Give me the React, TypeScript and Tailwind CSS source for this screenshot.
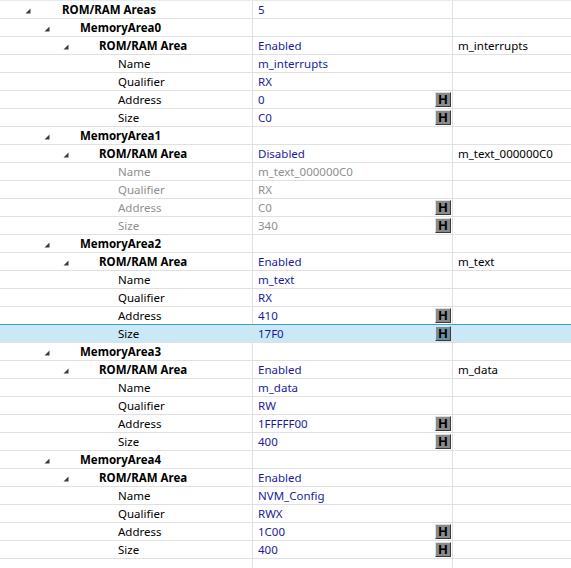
import React from 'react';

type Row = {
    level: number;
    label: string;
    value?: string;
    extra?: string;
    bold?: boolean;
    expandable?: boolean;
    hex?: boolean;
    disabled?: boolean;
    selected?: boolean;
};

const areas = [
    { state: 'Enabled', name: 'm_interrupts', qualifier: 'RX', address: '0', size: 'C0', extra: 'm_interrupts' },
    { state: 'Disabled', name: 'm_text_000000C0', qualifier: 'RX', address: 'C0', size: '340', extra: 'm_text_000000C0' },
    { state: 'Enabled', name: 'm_text', qualifier: 'RX', address: '410', size: '17F0', extra: 'm_text', selected: true },
    { state: 'Enabled', name: 'm_data', qualifier: 'RW', address: '1FFFFF00', size: '400', extra: 'm_data' },
    { state: 'Enabled', name: 'NVM_Config', qualifier: 'RWX', address: '1C00', size: '400', extra: '' },
];

const rows: Row[] = [{ level: 0, label: 'ROM/RAM Areas', value: '5', bold: true, expandable: true }];
areas.forEach((a, i) => {
    const off = a.state === 'Disabled';
    rows.push({ level: 1, label: `MemoryArea${i}`, bold: true, expandable: true });
    rows.push({ level: 2, label: 'ROM/RAM Area', value: a.state, extra: a.extra, bold: true, expandable: true });
    rows.push({ level: 3, label: 'Name', value: a.name, disabled: off });
    rows.push({ level: 3, label: 'Qualifier', value: a.qualifier, disabled: off });
    rows.push({ level: 3, label: 'Address', value: a.address, hex: true, disabled: off });
    rows.push({ level: 3, label: 'Size', value: a.size, hex: true, disabled: off, selected: a.selected });
});

const indent = ['pl-[62px]', 'pl-[80px]', 'pl-[99px]', 'pl-[118px]'];
const arrowPos = ['left-[25px]', 'left-[44px]', 'left-[63px]', 'left-[82px]'];

const Expander: React.FC<{ level: number }> = ({ level }) => (
    <svg className={`absolute top-[7px] ${arrowPos[level]}`} width="6" height="6" viewBox="0 0 6 6">
        <polygon points="5.5,0.5 5.5,5.5 0.5,5.5" fill="#3c3c3c" />
    </svg>
);

const HexButton: React.FC<{ selected?: boolean }> = ({ selected }) => (
    <div
        className={`w-[16px] h-[15px] flex items-center justify-center border border-t-[#e0e0e0] border-l-[#e0e0e0] border-r-[#3a3a3a] border-b-[#3a3a3a] text-[13px] font-bold leading-none text-black ${
            selected ? 'bg-[#71909f]' : 'bg-[#8a8a8a]'
        }`}
        style={{ fontFamily: '"Liberation Sans", Arial, sans-serif' }}
    >
        H
    </div>
);

export default function App() {
    return (
        <div
            className="w-[571px] h-[568px] flex flex-col bg-white border-t border-[#e6ebf3] overflow-hidden text-[11.5px]"
            style={{ fontFamily: '"Noto Sans", "Open Sans", sans-serif' }}
        >
            {rows.map((r, i) => {
                const nextSelected = rows[i + 1]?.selected;
                return (
                    <div
                        key={i}
                        className={`flex h-[18px] shrink-0 border-b ${nextSelected ? 'border-[#3e9ed4]' : 'border-[#e0e0e0]'} ${
                            r.selected ? 'bg-[#cbe8f6]' : ''
                        }`}
                    >
                        <div
                            className={`relative w-[253px] border-r border-[#e0e0e0] flex items-center ${indent[r.level]} ${
                                r.bold ? 'font-bold text-black' : r.disabled ? 'text-[#8f8f8f]' : 'text-black'
                            }`}
                        >
                            {r.expandable && <Expander level={r.level} />}
                            <span className="leading-none">{r.label}</span>
                        </div>
                        <div
                            className={`w-[200px] border-r border-[#e0e0e0] flex items-center justify-between pl-[5px] pr-px ${
                                r.disabled ? 'text-[#8f8f8f]' : 'text-[#1a1aa0]'
                            }`}
                        >
                            <span className="leading-none">{r.value}</span>
                            {r.hex && <HexButton selected={r.selected} />}
                        </div>
                        <div className="flex-1 flex items-center pl-[5px] text-black">
                            <span className="leading-none">{r.extra}</span>
                        </div>
                    </div>
                );
            })}
            <div className="flex flex-1">
                <div className="w-[253px] border-r border-[#e0e0e0]" />
                <div className="w-[200px] border-r border-[#e0e0e0]" />
                <div className="flex-1" />
            </div>
        </div>
    );
}
